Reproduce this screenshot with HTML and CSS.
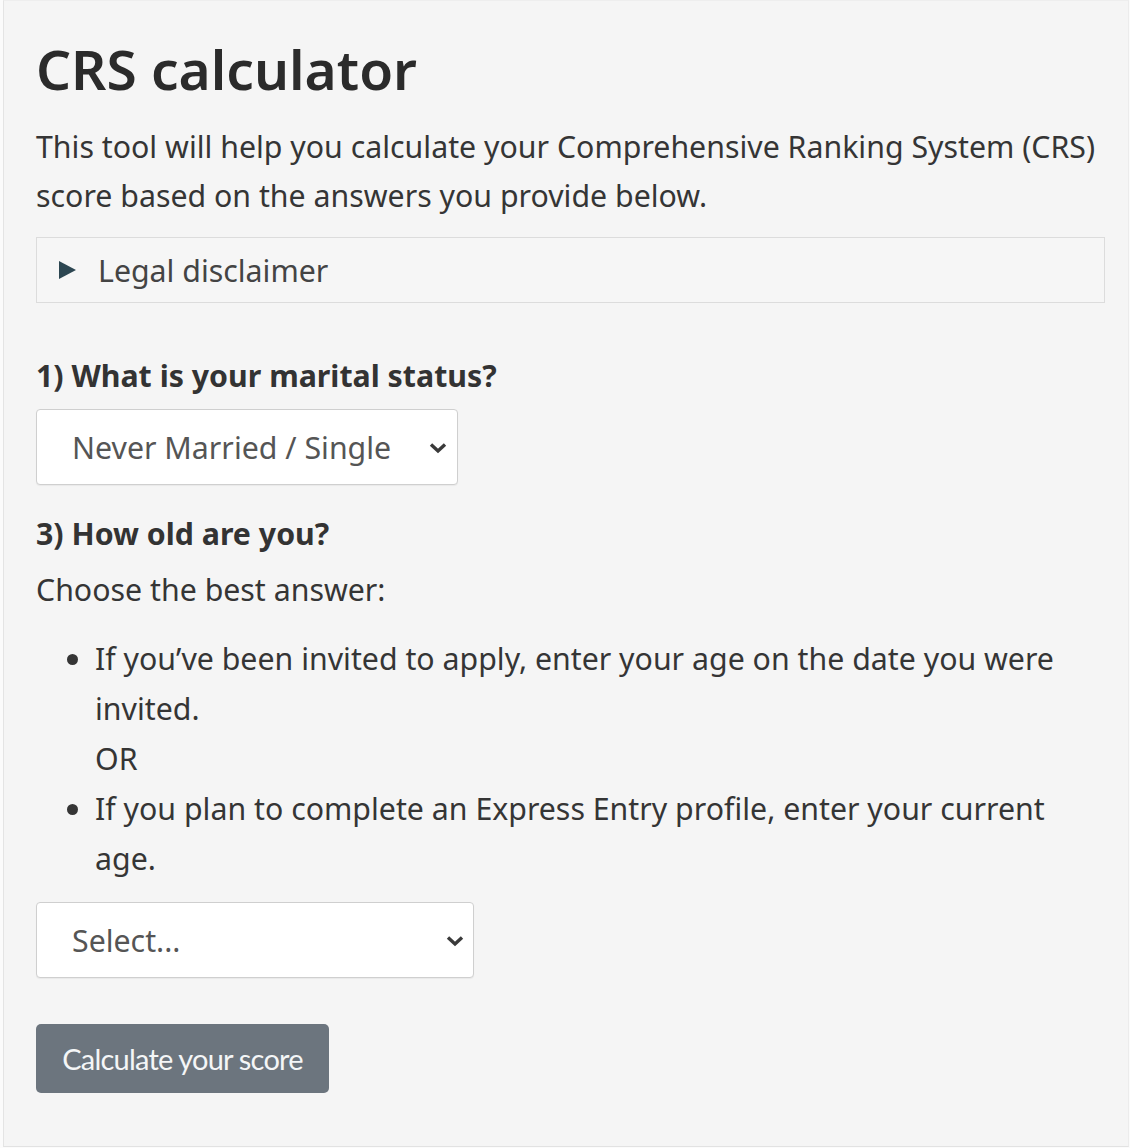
FILE: index.html
```html
<!DOCTYPE html>
<html lang="en">
<head>
<meta charset="utf-8">
<title>CRS calculator</title>
<link rel="stylesheet" href="styles.css">
</head>
<body>
<main class="panel">
  <h1 class="title">CRS calculator</h1>
  <p class="intro">This tool will help you calculate your Comprehensive Ranking System (CRS) score based on the answers you provide below.</p>
  <details class="disclaimer">
    <summary class="disclaimer-summary"><span class="tri"></span>Legal disclaimer</summary>
  </details>
  <div class="field first">
    <label class="q-label" for="q1">1) What is your marital status?</label>
    <div class="select narrow">
      <span class="select-text">Never Married / Single</span>
      <svg class="chev" viewBox="0 0 18 12" width="18" height="12"><path d="M2 2.5 L9 9 L16 2.5" fill="none" stroke="#3a3a3a" stroke-width="3.4"/></svg>
    </div>
  </div>
  <div class="field">
    <label class="q-label">3) How old are you?</label>
    <p class="help">Choose the best answer:</p>
    <ul class="choices">
      <li>If you’ve been invited to apply, enter your age on the date you were invited.<br>OR</li>
      <li>If you plan to complete an Express Entry profile, enter your current age.</li>
    </ul>
    <div class="select wide">
      <span class="select-text">Select...</span>
      <svg class="chev" viewBox="0 0 18 12" width="18" height="12"><path d="M2 2.5 L9 9 L16 2.5" fill="none" stroke="#3a3a3a" stroke-width="3.4"/></svg>
    </div>
  </div>
  <button class="btn" type="button">Calculate your score</button>
</main>
</body>
</html>
```
FILE: styles.css
```css
html, body {
  margin: 0;
  padding: 0;
  background: #fbfbfb;
}
body {
  font-family: "Noto Sans", "DejaVu Sans", sans-serif;
  color: #353535;
}
.panel {
  box-sizing: border-box;
  margin-left: 3px;
  width: 1126px;
  height: 1147px;
  background: #f5f5f5;
  border-left: 1px solid #e4e4e4;
  border-right: 1px solid #ececec;
  border-bottom: 1px solid #e2e2e2;
  border-top: 1px solid #eeeeee;
  padding: 32px 23px 0 32px;
}
.title {
  font-family: "Noto Sans", sans-serif;
  font-weight: 600;
  font-size: 55px;
  line-height: 72px;
  letter-spacing: 0;
  margin: 0;
  color: #2b2b2b;
}
.intro {
  font-size: 30.3px;
  line-height: 49px;
  margin: 17px 0 0 0;
}
.disclaimer {
  margin-top: 17px;
  border: 1px solid #dcdcdc;
  background: #f6f6f6;
  width: 1069px;
  box-sizing: border-box;
}
.disclaimer-summary {
  list-style: none;
  display: flex;
  align-items: center;
  height: 64px;
  padding-left: 22px;
  font-size: 30.3px;
  color: #444;
}
.disclaimer-summary::-webkit-details-marker { display: none; }
.tri {
  width: 0;
  height: 0;
  border-top: 9px solid transparent;
  border-bottom: 9px solid transparent;
  border-left: 17px solid #2c4651;
  margin-right: 22px;
}
.field.first { margin-top: 55px; }
.field { margin-top: 31px; }
.q-label {
  display: block;
  font-weight: 700;
  font-size: 30.3px;
  line-height: 36px;
  color: #333;
}
.select {
  margin-top: 15px;
  box-sizing: border-box;
  height: 76px;
  background: #fff;
  border: 1px solid #cfcfcf;
  border-radius: 4px;
  display: flex;
  align-items: center;
  justify-content: space-between;
  padding: 0 10px 0 35px;
  box-shadow: 0 1px 1px rgba(0,0,0,0.05);
}
.select.narrow { width: 422px; }
.select.wide { width: 438px; margin-top: 18px; padding-right: 9px; }
.select-text {
  font-size: 30.3px;
  color: #555;
}
.chev { margin-top: 2px; }
.help {
  font-size: 30.3px;
  line-height: 50px;
  margin: 13px 0 0 0;
}
.choices {
  font-size: 30.3px;
  line-height: 50px;
  margin: 19px 0 0 0;
  padding-left: 59px;
}
.btn {
  display: block;
  margin-top: 46px;
  width: 293px;
  height: 69px;
  background: #6c757e;
  border: none;
  border-radius: 5px;
  color: #f4f6f7;
  font-family: Lato, sans-serif;
  font-size: 29px;
  letter-spacing: -0.8px;
  padding: 0;
}
```
